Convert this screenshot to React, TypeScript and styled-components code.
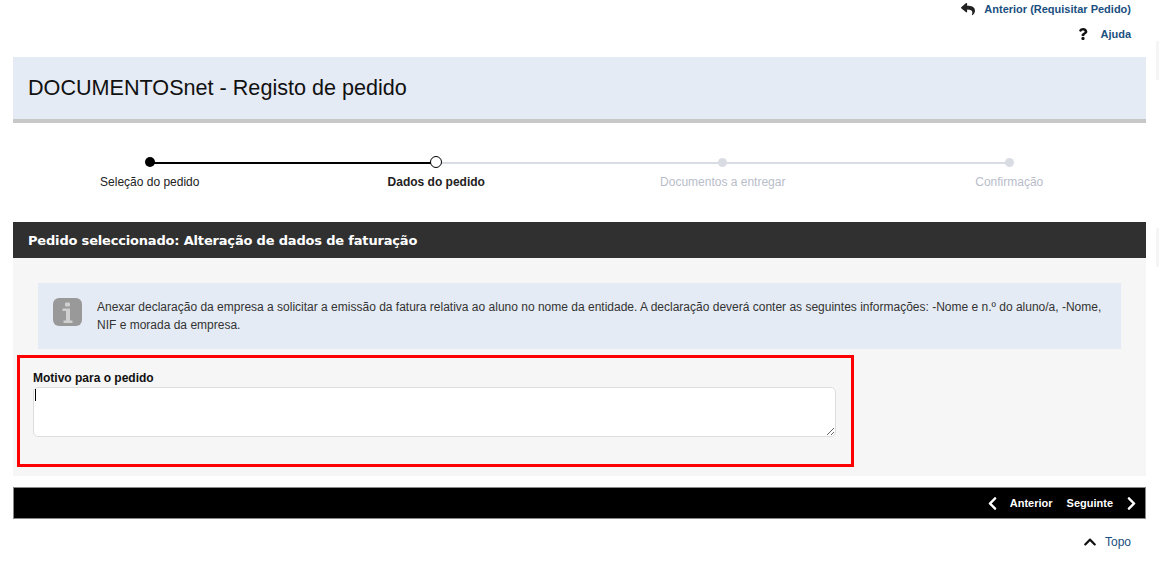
import React from "react";
import styled, { createGlobalStyle } from "styled-components";
import { FaChevronLeft, FaChevronRight, FaChevronUp, FaQuestion, FaReply } from "react-icons/fa";

const GlobalStyle = createGlobalStyle`
  html, body {
    margin: 0;
    padding: 0;
    background: #fff;
    overflow: hidden;
  }
  body {
    font-family: "Liberation Sans", Arial, sans-serif;
    font-size: 12px;
    color: #222;
  }
`;

const steps = [
  { label: "Seleção do pedido", state: "done" },
  { label: "Dados do pedido", state: "current" },
  { label: "Documentos a entregar", state: "todo" },
  { label: "Confirmação", state: "todo" },
] as const;

export default function App() {
  return (
    <>
      <GlobalStyle />
      <Page>
        <TopLinks>
          <TopLink>
            <FaReply size={14} color="#222" />
            <LinkText>Anterior (Requisitar Pedido)</LinkText>
          </TopLink>
          <TopLink>
            <FaQuestion size={12} color="#111" />
            <LinkText>Ajuda</LinkText>
          </TopLink>
        </TopLinks>

        <Header>
          <Title>DOCUMENTOSnet - Registo de pedido</Title>
        </Header>

        <Stepper>
          {steps.map((step, i) => (
            <Step key={step.label}>
              <Track $state={step.state} $last={i === steps.length - 1}>
                <Dot $state={step.state} />
              </Track>
              <StepLabel $state={step.state}>{step.label}</StepLabel>
            </Step>
          ))}
        </Stepper>

        <PanelHeading>Pedido seleccionado: Alteração de dados de faturação</PanelHeading>
        <PanelBody>
          <InfoBox>
            <InfoIcon viewBox="0 0 29 28" aria-hidden="true">
              <rect width="29" height="28" rx="6" fill="#999" />
              <rect x="12" y="4.5" width="5" height="4" rx="1" fill="#cfcfcf" />
              <path d="M9.5 10.5h7.5v12h2.5v2.5h-9V22.500h2.500v-9.500h-3.500z" fill="#cfcfcf" />
            </InfoIcon>
            <InfoText>
              Anexar declaração da empresa a solicitar a emissão da fatura relativa ao aluno no nome da entidade. A
              declaração deverá conter as seguintes informações: -Nome e n.º do aluno/a, -Nome, NIF e morada da empresa.
            </InfoText>
          </InfoBox>

          <Highlight>
            <FieldLabel htmlFor="motivo">Motivo para o pedido</FieldLabel>
            <TextArea id="motivo" defaultValue="" />
            <Caret />
          </Highlight>
        </PanelBody>

        <NavBar>
          <NavIcon>
            <FaChevronLeft size={15} />
          </NavIcon>
          <NavLink>Anterior</NavLink>
          <NavLink>Seguinte</NavLink>
          <NavIcon>
            <FaChevronRight size={15} />
          </NavIcon>
        </NavBar>

        <TopRow>
          <FaChevronUp size={14} color="#111" />
          <LinkRegular>Topo</LinkRegular>
        </TopRow>
      </Page>
      <SideTab $top={41} $bg="#f5f5f5" />
      <SideTab $top={228} $bg="#f5f5f5" />
    </>
  );
}

const Page = styled.div`
  width: 1133px;
  margin-left: 13px;
  display: flex;
  flex-direction: column;
`;

const TopLinks = styled.div`
  height: 57px;
  display: flex;
  flex-direction: column;
  align-items: flex-end;
  padding-right: 15px;
  box-sizing: border-box;
`;

const TopLink = styled.a`
  height: 17px;
  margin-bottom: 8px;
  display: flex;
  align-items: center;
  gap: 9px;
  & + & {
    gap: 11px;
  }
`;

const LinkText = styled.span`
  font-size: 11px;
  font-weight: 700;
  color: #1a4f80;
`;

const LinkRegular = styled.span`
  font-size: 12px;
  font-weight: 400;
  color: #1a4f80;
`;

const Header = styled.div`
  height: 62px;
  display: flex;
  align-items: center;
  padding-left: 15px;
  background: #e5ebf4;
  border-bottom: 4px solid #c8c8c8;
`;

const Title = styled.h1`
  margin: 0;
  font-size: 21.6px;
  font-weight: 400;
  color: #111;
`;

const Stepper = styled.div`
  display: grid;
  grid-template-columns: repeat(4, 286.5px);
  width: 1146px;
  margin: 33px 0 0 -6.5px;
  height: 66px;
`;

const Step = styled.div`
  display: flex;
  flex-direction: column;
  align-items: center;
`;

const Track = styled.div<{ $state: string; $last: boolean }>`
  position: relative;
  width: 100%;
  height: 12px;
  display: flex;
  align-items: center;
  justify-content: center;
  &::after {
    content: "";
    display: ${(p) => (p.$last ? "none" : "block")};
    position: absolute;
    left: 50%;
    width: 100%;
    top: 5.5px;
    height: 2px;
    background: ${(p) => (p.$state === "done" ? "#000" : "#d9dce3")};
  }
`;

const Dot = styled.span<{ $state: string }>`
  position: relative;
  z-index: 1;
  box-sizing: border-box;
  border-radius: 50%;
  width: ${(p) => (p.$state === "todo" ? 9 : p.$state === "current" ? 12 : 10)}px;
  height: ${(p) => (p.$state === "todo" ? 9 : p.$state === "current" ? 12 : 10)}px;
  background: ${(p) => (p.$state === "done" ? "#000" : p.$state === "current" ? "#fff" : "#d9dce3")};
  border: ${(p) => (p.$state === "current" ? "1.5px solid #000" : "none")};
`;

const StepLabel = styled.div<{ $state: string }>`
  margin-top: 7px;
  font-size: 12px;
  line-height: 14px;
  font-weight: ${(p) => (p.$state === "current" ? 700 : 400)};
  color: ${(p) => (p.$state === "todo" ? "#b9bdca" : "#222")};
`;

const PanelHeading = styled.div`
  height: 36px;
  display: flex;
  align-items: center;
  padding-left: 15px;
  background: #303030;
  color: #fff;
  font-family: "DejaVu Sans", Verdana, sans-serif;
  font-size: 13px;
  font-weight: 700;
  letter-spacing: -0.18px;
`;

const PanelBody = styled.div`
  height: 218px;
  box-sizing: border-box;
  padding: 25px 25px 0;
  background: #f6f6f6;
`;

const InfoBox = styled.div`
  height: 66px;
  box-sizing: border-box;
  display: flex;
  align-items: flex-start;
  gap: 15px;
  padding: 15px 15px 0;
  background: #e5ebf4;
`;

const InfoIcon = styled.svg`
  flex: none;
  width: 29px;
  height: 28px;
`;

const InfoText = styled.p`
  margin: 0;
  font-size: 12px;
  line-height: 18px;
  color: #333;
`;

const Highlight = styled.div`
  position: relative;
  width: 837px;
  height: 112px;
  box-sizing: border-box;
  margin: 6px 0 0 -21px;
  padding: 13px 13px 0;
  border: 3px solid #f00;
`;

const FieldLabel = styled.label`
  display: block;
  font-size: 12px;
  line-height: 15px;
  font-weight: 700;
  color: #111;
`;

const TextArea = styled.textarea`
  display: block;
  width: 803px;
  height: 50px;
  box-sizing: border-box;
  margin: 1px 0 0;
  background: #fff;
  border: 1px solid #ddd;
  border-radius: 5px;
  outline: none;
`;

const Caret = styled.span`
  position: absolute;
  left: 15px;
  top: 31px;
  width: 1px;
  height: 12px;
  background: #000;
`;

const NavBar = styled.div`
  height: 32px;
  margin-top: 11px;
  box-sizing: border-box;
  display: flex;
  align-items: center;
  justify-content: flex-end;
  padding-right: 7px;
  background: #000;
  border: 1px solid #888;
  color: #fff;
`;

const NavIcon = styled.span`
  display: flex;
  align-items: center;
  width: 13px;
  justify-content: center;
`;

const NavLink = styled.a`
  margin: 0 7px;
  font-size: 11px;
  font-weight: 700;
  color: #fff;
  &:first-of-type {
    margin-left: 11px;
  }
  & + & {
    margin-right: 12px;
  }
`;

const TopRow = styled.div`
  height: 16px;
  margin-top: 15px;
  display: flex;
  align-items: center;
  justify-content: flex-end;
  gap: 8px;
  padding-right: 15px;
`;

const SideTab = styled.div<{ $top: number; $bg: string }>`
  position: absolute;
  right: 0;
  top: ${(p) => p.$top}px;
  width: 3px;
  height: 39px;
  background: ${(p) => p.$bg};
`;
